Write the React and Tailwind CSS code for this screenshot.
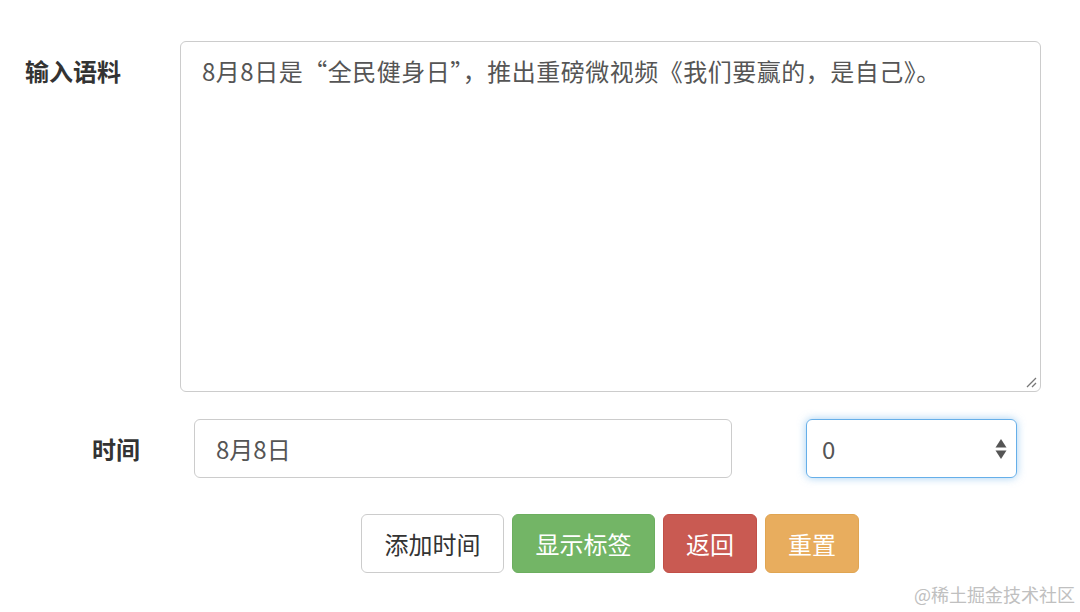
export default function App() {
  const font = { fontFamily: '"Noto Sans CJK SC", "Noto Sans", sans-serif' };
  return (
    <div className="relative w-[1080px] h-[612px] bg-white overflow-hidden text-[#333]" style={font}>
      <div className="pt-[41px]">
        <div className="flex">
          <div className="w-[180px] pl-[25px] pt-[12px] text-[24px] font-bold leading-[36px] text-[#333]">输入语料</div>
          <div className="w-[861px] h-[351px] border border-[#ccc] rounded-[6px] px-[21px] pt-[11px] text-[24px] leading-[36px] tracking-[0.5px] text-[#555] relative">
            8月8日是“全民健身日”，推出重磅微视频《我们要赢的，是自己》。
            <svg className="absolute right-[3px] bottom-[3px]" width="12" height="12" viewBox="0 0 12 12">
              <path d="M11 2 L2 11 M11 7 L7 11" stroke="#777" strokeWidth="1.3" />
            </svg>
          </div>
        </div>
        <div className="flex items-center mt-[27px]">
          <div className="w-[140px] text-right text-[24px] font-bold text-[#333]">时间</div>
          <div className="ml-[54px] w-[538px] h-[59px] border border-[#ccc] rounded-[6px] px-[21px] flex items-center text-[24px] text-[#555]">8月8日</div>
          <div className="ml-[74px] w-[211px] h-[59px] border border-[#66afe9] rounded-[6px] pl-[15px] pr-[9px] flex items-center justify-between text-[24px] text-[#555] shadow-[0_0_8px_rgba(102,175,233,0.6)]">
            <span>0</span>
            <svg width="12" height="22" viewBox="0 0 12 22">
              <path d="M6 1 L11.5 9.5 L0.5 9.5 Z" fill="#555" />
              <path d="M0.5 12.5 L11.5 12.5 L6 21 Z" fill="#555" />
            </svg>
          </div>
        </div>
        <div className="flex mt-[36px] pl-[361px] gap-[8px] text-[24px]">
          <div className="w-[143px] h-[59px] border border-[#ccc] rounded-[6px] bg-white text-[#333] flex items-center justify-center">添加时间</div>
          <div className="w-[143px] h-[59px] border border-[#6cae5f] rounded-[6px] bg-[#73b566] text-white flex items-center justify-center">显示标签</div>
          <div className="w-[94px] h-[59px] border border-[#c24f47] rounded-[6px] bg-[#c95a52] text-white flex items-center justify-center">返回</div>
          <div className="w-[94px] h-[59px] border border-[#e0a552] rounded-[6px] bg-[#e8ad5e] text-white flex items-center justify-center">重置</div>
        </div>
      </div>
      <div className="absolute right-[5px] bottom-[4px] text-[18px] text-[#c0c0c0]">@稀土掘金技术社区</div>
    </div>
  );
}
